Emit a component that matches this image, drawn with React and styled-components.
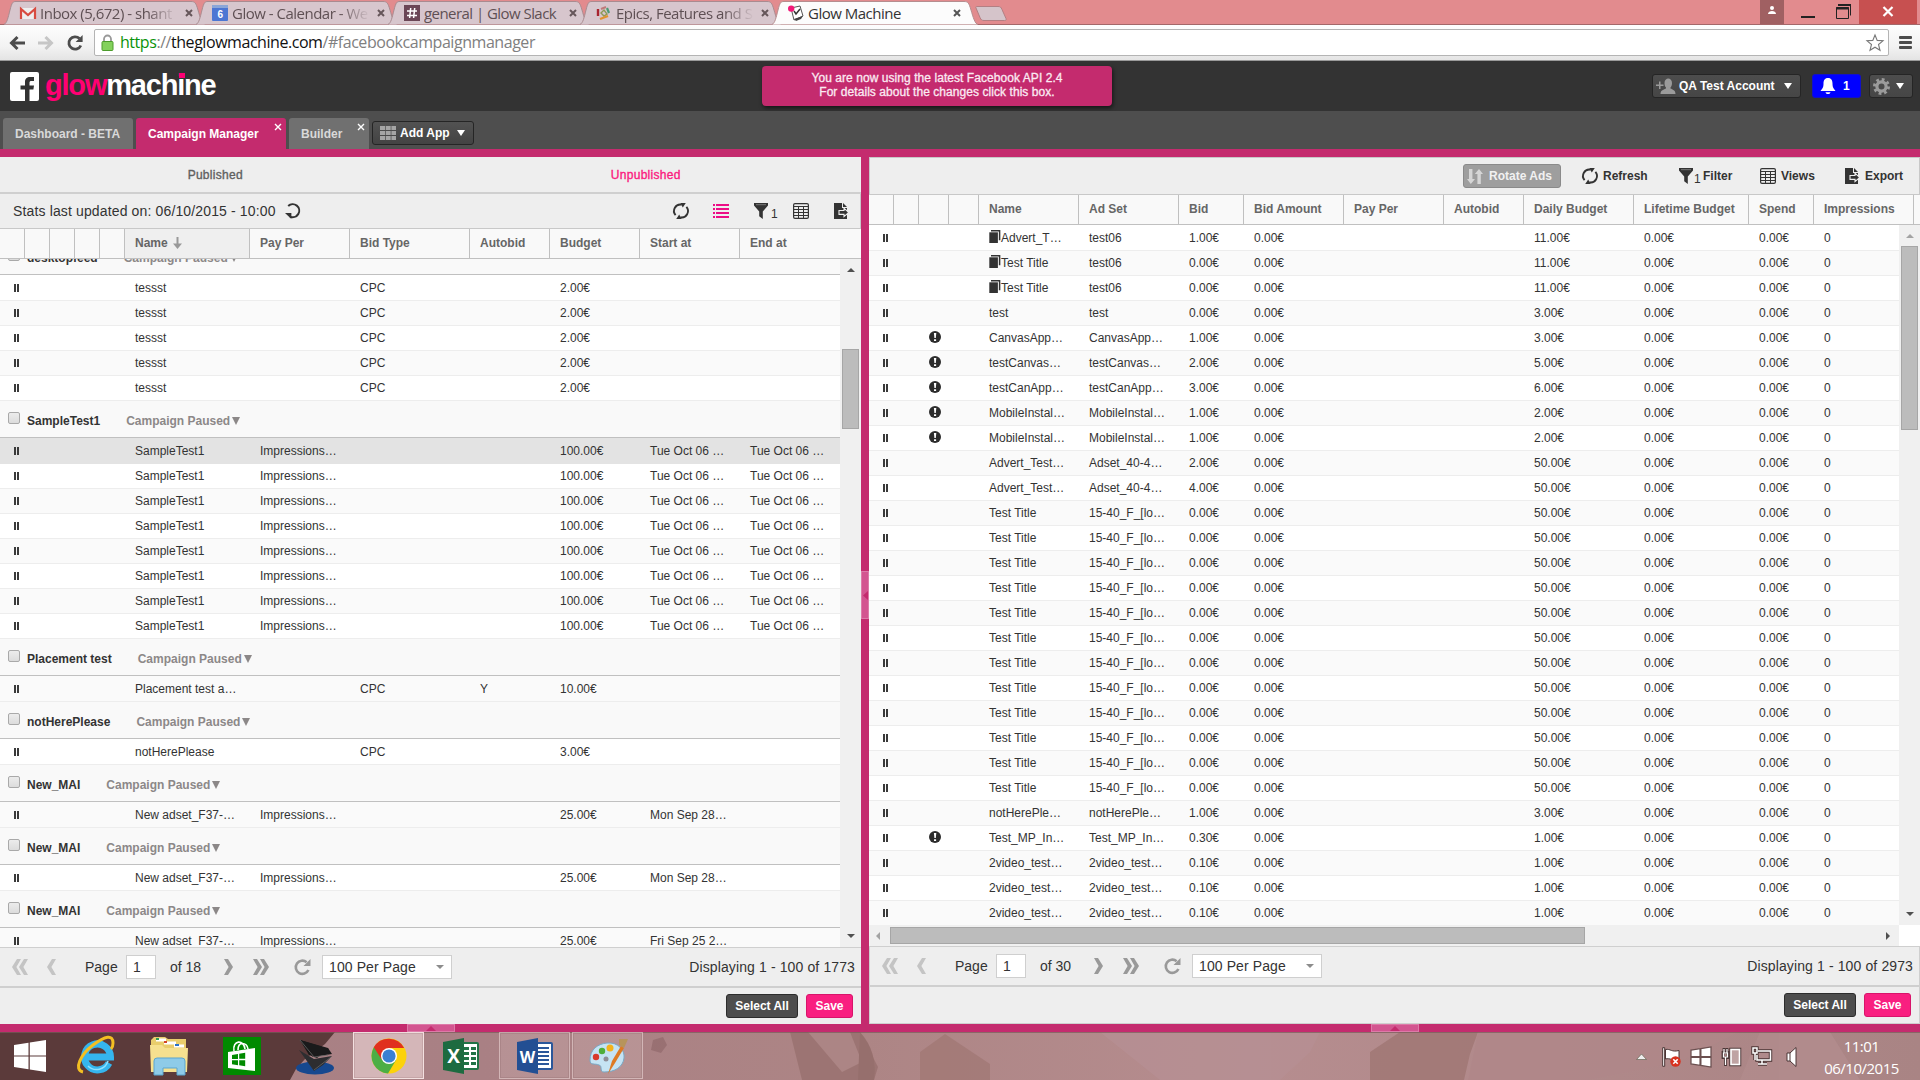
import React from "react";
import styled, { createGlobalStyle, css } from "styled-components";

const Global = createGlobalStyle`
  * { box-sizing: border-box; }
  body { margin: 0; background: #fff; overflow: hidden; }
`;

const ARIAL = '"Liberation Sans", Arial, sans-serif';
const SEGOE = '"Open Sans", "Noto Sans", sans-serif';
const PINK = "#c42b6e";
const LINE = "#cfcfcf";

const Screen = styled.div`
  width: 1920px;
  height: 1080px;
  display: flex;
  flex-direction: column;
  overflow: hidden;
  font: 12px/16px ${ARIAL};
  color: #333;
  background: #eee;
  white-space: nowrap;
`;
const Svg = styled.svg`
  display: block;
  flex: none;
  overflow: visible;
`;

/* ---------- browser chrome ---------- */
const TabStrip = styled.div`
  height: 25px;
  flex: none;
  display: flex;
  background: #e28b8e;
  border-bottom: 1px solid #a46769;
`;
const BrowserTabs = styled.div`
  display: flex;
  padding-left: 8px;
  flex: 1;
`;
const BrowserTabBox = styled.div`
  position: relative;
  z-index: ${(p) => (p.$active ? 2 : 0)};
  width: ${(p) => p.$w}px;
  height: 25px;
  display: flex;
  align-items: center;
  padding: 0 0 0 12px;
  font: 15px/22px ${SEGOE};
  letter-spacing: ${(p) => p.$ls}px;
  color: ${(p) => (p.$active ? "#333" : "#5f5054")};
`;
const TabShape = styled(Svg)`
  position: absolute;
  left: -4px;
  top: 0;
`;
const Fav = styled.div`
  position: relative;
  width: 16px;
  height: 16px;
  flex: none;
`;
const TabLabel = styled.span`
  position: relative;
  flex: none;
  width: ${(p) => p.$w}px;
  margin-left: 4px;
  overflow: hidden;
  ${(p) => p.$fade && css`mask-image: linear-gradient(90deg, #000 78%, transparent 100%);`}
`;
const TabClose = styled.div`
  position: relative;
  margin-left: auto;
  margin-right: ${(p) => p.$r}px;
`;
const WinControls = styled.div`
  display: flex;
  align-items: flex-start;
  height: 24px;
  padding-right: 3px;
`;
const WinButton = styled.div`
  width: ${(p) => p.$w}px;
  height: 24px;
  display: flex;
  justify-content: center;
  background: ${(p) => p.$bg || "transparent"};
`;
const AddressRow = styled.div`
  height: 36px;
  flex: none;
  display: flex;
  align-items: center;
  padding: 0 8px 0 9px;
  background: linear-gradient(#fdfdfd, #f3f3f3 60%, #e4e4e4);
  border-bottom: 1px solid #9a9a9a;
`;
const NavIcons = styled.div`
  display: flex;
  gap: 13px;
  width: 85px;
`;
const AddressBox = styled.div`
  flex: 1;
  height: 27px;
  display: flex;
  align-items: center;
  gap: 6px;
  padding: 0 4px 0 6px;
  background: #fff;
  border: 1px solid #b4b4b4;
  border-radius: 2px;
`;
const Url = styled.span`
  flex: 1;
  padding-bottom: 1px;
  font: 16px/22px ${SEGOE};
  letter-spacing: -0.45px;
  color: #808080;
  i { font-style: normal; color: #0a930a; }
  b { font-weight: normal; color: #111; }
`;
const MenuIcon = styled.div`
  display: grid;
  gap: 2px;
  width: 13px;
  margin-left: 10px;
  span { height: 3px; background: #4c4c4c; border-radius: 1px; }
`;

/* ---------- application header ---------- */
const Header = styled.div`
  height: 50px;
  flex: none;
  display: grid;
  grid-template-columns: 762px 350px 1fr;
  background: #333;
`;
const Brand = styled.div`
  display: flex;
  padding: 11px 0 0 10px;
`;
const BrandText = styled.div`
  position: relative;
  margin: -3px 0 0 6px;
  font: bold 29px/32px ${ARIAL};
  letter-spacing: -1.2px;
  color: #fff;
  em { font-style: normal; color: #ff0073; }
`;
const BrandDot = styled.span`
  position: absolute;
  left: 134px;
  top: 4px;
  width: 6px;
  height: 5px;
  background: #ff0073;
`;
const Notice = styled.div`
  height: 40px;
  margin-top: 5px;
  padding-top: 5px;
  text-align: center;
  font: 12px/14px ${ARIAL};
  letter-spacing: 0.06px;
  -webkit-text-stroke: 0.3px #fbeaf2;
  color: #fbeaf2;
  background: ${PINK};
  border-radius: 4px;
  box-shadow: 1px 2px 4px #0009;
`;
const HeaderTools = styled.div`
  display: flex;
  justify-content: flex-end;
  padding: 13px 7px 0 0;
`;
const DarkButton = styled.div`
  display: flex;
  align-items: center;
  width: ${(p) => p.$w}px;
  height: ${(p) => p.$h || 24}px;
  margin-left: ${(p) => p.$ml || 0}px;
  padding: 0 8px 0 ${(p) => p.$pl}px;
  font-weight: bold;
  color: #fff;
  background: ${(p) => p.$bg || "linear-gradient(#4d4d4d, #464646)"};
  border: 1px solid ${(p) => p.$line || "#252525"};
  border-radius: 3px;
`;
const Caret = styled.span`
  margin-left: auto;
  border: 4px solid transparent;
  border-top: 6px solid ${(p) => p.$c || "#fff"};
  border-bottom: 0;
`;
const ButtonText = styled.span`
  margin-left: ${(p) => p.$ml}px;
`;

const AppTabs = styled.div`
  height: 46px;
  flex: none;
  display: flex;
  align-items: flex-end;
  gap: 3px;
  padding-left: 3px;
  background: #4e4e4e;
  border-bottom: 8px solid ${PINK};
`;
const AppTab = styled.div`
  width: ${(p) => p.$w}px;
  height: 31px;
  display: flex;
  justify-content: space-between;
  padding: 8px 4px 0 12px;
  font-weight: bold;
  color: ${(p) => (p.$active ? "#fff" : "#d9d9d9")};
  background: ${(p) => (p.$active ? PINK : "#707070")};
  border-radius: 3px 3px 0 0;
`;
const AppTabClose = styled.div`
  margin-top: -3px;
`;
const AddAppWrap = styled.div`
  align-self: flex-start;
  padding-top: 10px;
`;

/* ---------- panels ---------- */
const Workspace = styled.div`
  height: 867px;
  flex: none;
  display: grid;
  grid-template-columns: 861px 8px 1051px;
`;
const Panel = styled.section`
  display: flex;
  flex-direction: column;
  min-width: 0;
  overflow: hidden;
  background: #eee;
`;
const Splitter = styled.div`
  display: flex;
  align-items: center;
  padding-top: 9px;
  height: 867px;
  background: ${PINK};
`;
const Grip = styled.div`
  display: flex;
  align-items: center;
  justify-content: center;
  width: ${(p) => p.$w}px;
  height: ${(p) => p.$h}px;
  background: #d35590;
  border: 1px solid #dd7aa8;
`;
const BottomBar = styled.div`
  height: 8px;
  flex: none;
  display: grid;
  grid-template-columns: 861px 1fr;
  justify-items: center;
  background: ${PINK};
`;
const GripSlot = styled.div`
  padding-left: ${(p) => p.$pl || 0}px;
`;
const StateTabs = styled.div`
  height: 37px;
  flex: none;
  display: grid;
  grid-template-columns: 1fr 1fr;
  border-bottom: 2px solid ${LINE};
`;
const StateTab = styled.div`
  text-align: center;
  padding-top: 10px;
  letter-spacing: 0.28px;
  -webkit-text-stroke: 0.35px currentColor;
  color: ${(p) => (p.$active ? "#fb1b80" : "#606060")};
`;
const StatsBar = styled.div`
  height: 35px;
  flex: none;
  display: flex;
  align-items: center;
  padding: 0 10px 0 13px;
  font-size: 14px;
  border-bottom: 1px solid #c8c8c8;
  border-right: 1px solid #c8c8c8;
`;
const StatsText = styled.span`
  letter-spacing: 0.14px;
  margin-right: 9px;
`;
const IconSlot = styled.div`
  display: flex;
  align-items: ${(p) => (p.$mt ? "flex-start" : "center")};
  margin-left: ${(p) => p.$ml || 0}px;
  margin-top: ${(p) => p.$mt || 0}px;
`;
const Push = styled.div`
  flex: 1;
`;
const Count = styled.span`
  width: ${(p) => p.$w || 8}px;
  padding: 5px 0 0 ${(p) => p.$pl ?? 1}px;
  font: 12px/12px ${ARIAL};
`;
const RightTools = styled.div`
  height: 38px;
  flex: none;
  display: flex;
  align-items: center;
  padding-right: 16px;
  font-weight: bold;
  border: 1px solid #c8c8c8;
`;
const RotateButton = styled.div`
  display: flex;
  align-items: center;
  gap: 6px;
  width: 98px;
  height: 24px;
  padding-left: 3px;
  color: #f1f1f1;
  background: #9e9e9e;
  border: 1px solid #8a8a8a;
  border-radius: 3px;
`;
const Tool = styled.div`
  display: flex;
  align-items: center;
  width: ${(p) => p.$w}px;
  margin-left: ${(p) => p.$ml}px;
`;
const ToolLabel = styled.span`
  margin-left: ${(p) => p.$ml ?? 5}px;
`;

/* ---------- grids ---------- */
const LEFT_COLS = "25px 25px 25px 25px 25px 125px 100px 120px 80px 90px 100px 1fr";
const RIGHT_COLS = "25px 25px 30px 30px 100px 100px 65px 100px 100px 80px 110px 115px 65px 100px 1fr";

const HeadRow = styled.div`
  height: 30px;
  flex: none;
  display: grid;
  grid-template-columns: ${(p) => p.$cols};
  background: #f9f9f9;
  border-bottom: 1px solid #c0c0c0;
  overflow: hidden;
`;
const HeadCell = styled.div`
  display: flex;
  padding: 6px 0 0 10px;
  font-weight: bold;
  color: #666;
  background: ${(p) => (p.$sorted ? "#efefef" : "transparent")};
  border-right: 1px solid #c0c0c0;
  &:last-child { border-right: 0; }
`;
const Body = styled.div`
  flex: 1;
  min-height: 0;
  display: grid;
  grid-template-columns: minmax(0, 1fr) 21px;
  grid-template-rows: minmax(0, 1fr) auto;
  background: #fff;
`;
const Rows = styled.div`
  overflow: hidden;
`;
const Scrolled = styled.div`
  margin-top: ${(p) => -p.$by}px;
`;
const Row = styled.div`
  display: grid;
  grid-template-columns: ${(p) => p.$cols};
  height: ${(p) => (p.$first ? 26 : 25)}px;
  padding-top: ${(p) => (p.$first ? 5 : 4)}px;
  background: ${(p) => (p.$selected ? "#e3e3e3" : p.$alt ? "#fafafa" : "#fff")};
  border-bottom: 1px solid ${(p) => (p.$selected ? "#e3e3e3" : "#ededed")};
`;
const Cell = styled.div`
  display: flex;
  padding-left: 10px;
`;
const PauseMark = styled.span`
  width: 5px;
  height: 8px;
  margin: 4px 0 0 4px;
  border: solid #3a3a3a;
  border-width: 0 2px;
`;
const GroupRow = styled.div`
  height: 37px;
  display: flex;
  padding-left: 8px;
  background: #f9f9f9;
  border-bottom: 1px solid #c0c0c0;
  font-weight: bold;
`;
const Check = styled.span`
  width: 12px;
  height: 12px;
  margin-top: 11px;
  border: 1px solid #a9a9a9;
  border-radius: 2px;
  background: linear-gradient(#ececec, #dcdcdc);
`;
const GroupName = styled.span`
  margin: 12px 26px 0 7px;
`;
const GroupStatus = styled.span`
  display: flex;
  gap: 2px;
  margin-top: 12px;
  color: #8c8888;
`;

const VScroll = styled.div`
  display: flex;
  flex-direction: column;
  align-items: center;
  background: #f0f0f0;
`;
const VArrow = styled.span`
  height: 4px;
  margin: ${(p) => p.$m};
  border: 4px solid transparent;
  ${(p) => (p.$up ? "border-bottom" : "border-top")}-color: ${(p) => p.$c};
  ${(p) => (p.$up ? "border-top: 0" : "border-bottom: 0")};
`;
const VThumb = styled.div`
  width: 17px;
  height: ${(p) => p.$h}px;
  background: #bcbcbc;
  border: 1px solid #a6a6a6;
`;
const HScroll = styled.div`
  height: 21px;
  display: flex;
  align-items: center;
  background: #f0f0f0;
`;
const HArrow = styled.span`
  margin: ${(p) => p.$m};
  border: 4px solid transparent;
  ${(p) => (p.$left ? "border-right-color: #a3a3a3; border-left: 0" : "border-left-color: #505050; border-right: 0")};
`;
const HThumb = styled.div`
  width: 695px;
  height: 17px;
  background: #bcbcbc;
  border: 1px solid #a6a6a6;
`;

/* ---------- pager and footer ---------- */
const PagerBar = styled.div`
  height: 41px;
  flex: none;
  display: flex;
  align-items: center;
  padding: 0 6px 0 12px;
  font-size: 14px;
  border: solid ${LINE};
  border-width: 1px ${(p) => (p.$framed ? 1 : 0)}px 2px ${(p) => (p.$framed ? 1 : 0)}px;
`;
const PagerSlot = styled.div`
  width: ${(p) => p.$w}px;
  flex: none;
`;
const PageInput = styled.div`
  width: 30px;
  height: 24px;
  margin-right: 14px;
  padding: 3px 0 0 6px;
  background: #fff;
  border: 1px solid ${LINE};
`;
const PageSize = styled.div`
  width: 130px;
  height: 24px;
  display: flex;
  align-items: center;
  padding: 0 7px 0 6px;
  background: #fff;
  border: 1px solid ${LINE};
  letter-spacing: 0.1px;
`;
const SmallCaret = styled.span`
  margin-left: auto;
  border: 4px solid transparent;
  border-top-color: #8c8c8c;
  border-bottom: 0;
`;
const Totals = styled.span`
  margin-left: auto;
  letter-spacing: 0.12px;
`;
const FooterBar = styled.div`
  height: ${(p) => (p.$framed ? 37 : 36)}px;
  flex: none;
  display: flex;
  justify-content: flex-end;
  gap: 8px;
  padding: 6px 8px 0 0;
  border: solid ${LINE};
  border-width: 0 ${(p) => (p.$framed ? 1 : 0)}px ${(p) => (p.$framed ? 1 : 0)}px;
`;
const FooterButton = styled.div`
  width: ${(p) => (p.$primary ? 47 : 72)}px;
  height: 24px;
  padding-top: 3px;
  text-align: center;
  font-weight: bold;
  color: #fff;
  background: ${(p) => (p.$primary ? "#f91f80" : "#4d4d4d")};
  border: 1px solid ${(p) => (p.$primary ? "#d8146a" : "#2c2c2c")};
  border-radius: 3px;
`;

/* ---------- taskbar ---------- */
const Taskbar = styled.div`
  position: relative;
  height: 48px;
  flex: none;
  display: flex;
  background: #a98583;
`;
const Wallpaper = styled(Svg)`
  position: absolute;
  left: 0;
  top: 0;
`;
const TaskIcons = styled.div`
  position: relative;
  display: flex;
  flex: 1;
`;
const Task = styled.div`
  width: ${(p) => p.$w}px;
  height: 47px;
  margin-right: ${(p) => p.$mr || 0}px;
  display: flex;
  align-items: center;
  justify-content: center;
  ${(p) => p.$open && css`
    background: rgba(255, 235, 235, ${p.$open});
    border: 1px solid rgba(255, 240, 240, ${p.$open + 0.22});
    box-shadow: inset 0 0 0 1px rgba(90, 50, 50, 0.12);
  `}
`;
const Tray = styled.div`
  position: relative;
  display: flex;
  align-items: center;
  padding-top: 1px;
`;
const TrayIcon = styled.div`
  margin-right: ${(p) => p.$mr}px;
`;
const Clock = styled.div`
  width: 110px;
  padding-right: 7px;
  text-align: center;
  font: 15px/22px ${SEGOE};
  letter-spacing: -0.5px;
  color: #fff;
`;

/* ---------- icons ---------- */
const Cross = ({ c, s = 8, w = 2 }) => (
  <Svg width={s} height={s} viewBox="0 0 8 8" stroke={c} strokeWidth={w}>
    <path d="M1 1l6 6M7 1l-6 6" />
  </Svg>
);
const RefreshIcon = () => (
  <Svg width="16" height="16" viewBox="0 0 16 16" fill="none" stroke="#333" strokeWidth="1.9">
    <path d="M2.6 12.2A6.4 6.4 0 0 1 8.6 1.7M13.4 3.8A6.4 6.4 0 0 1 7.4 14.3" />
    <path d="M7.4 0h5.4l-3 4.6zM8.6 16H3.2l3-4.6z" fill="#333" stroke="none" />
  </Svg>
);
const ReloadStats = () => (
  <Svg width="16" height="16" viewBox="0 0 16 16" fill="none" stroke="#333" strokeWidth="2">
    <path d="M3.2 3A6.5 6.5 0 1 1 5 13.6" />
    <path d="M0 10h6.4v6z" fill="#333" stroke="none" />
  </Svg>
);
const ListIcon = () => (
  <Svg width="16" height="16" viewBox="0 0 16 16" fill="#ec0d86">
    {[1, 5, 9, 13].map((y) => (
      <path key={y} d={`M0 ${y}h2v2h-2zM3 ${y}h13v2H3z`} />
    ))}
  </Svg>
);
const FunnelIcon = () => (
  <Svg width="15" height="16" viewBox="0 0 15 16" fill="#333">
    <path d="M0 0h14v2.4L8.8 8.4V16L5.2 13.3V8.4L0 2.4z" />
    <path d="M2 1.7h10" stroke="#888" strokeWidth=".8" />
  </Svg>
);
const TableIcon = () => (
  <Svg width="16" height="16" viewBox="0 0 16 16" fill="none" stroke="#333">
    <rect x=".6" y=".6" width="14.8" height="14.8" rx="1.4" strokeWidth="1.2" />
    <path d="M1 3.5h14M1 6.5h14M1 9.5h14M1 12.5h14M5.5 3.5V15M10.5 3.5V15" />
  </Svg>
);
const ExportIcon = () => (
  <Svg width="16" height="16" viewBox="0 0 16 16" fill="#333">
    <path d="M0 0h8v5h5v11H0z" />
    <path d="M9 0l4 4H9z" />
    <path d="M5 7.5h5V5.2l4.8 4.3L10 13.6v-2.2H5z" fill="#333" stroke="#eee" strokeWidth="1.1" />
    <path d="M13.5 4v3M13.5 13v3" stroke="#eee" />
  </Svg>
);
const RotateIcon = () => (
  <Svg width="16" height="17" viewBox="0 0 16 17" fill="#d6d6d6">
    <path d="M2 1h3.4v10H8l-4.2 5L0 11h2zM10.4 16h3.4V6H16l-4-5-4.2 5h2.6z" />
  </Svg>
);
const Chevrons = ({ n, right, c }) => (
  <Svg width={n === 2 ? 16 : 9} height="16" viewBox={`0 0 ${n === 2 ? 16 : 9} 16`} fill={c}>
    <g transform={right ? "" : `translate(${n === 2 ? 16 : 9} 0) scale(-1 1)`}>
      <path d="M0 0h4l5 8-5 8H0l4.6-8z" />
      {n === 2 && <path d="M7 0h4l5 8-5 8H7l4.6-8z" />}
    </g>
  </Svg>
);
const PagerReload = () => (
  <Svg width="17" height="16" viewBox="0 0 17 16" fill="none" stroke="#999" strokeWidth="2.6">
    <path d="M14.4 11A6.6 6.6 0 1 1 12.6 3.2" />
    <path d="M16.5 0v7H9.5z" fill="#999" stroke="none" />
  </Svg>
);
const WarnIcon = () => (
  <Svg width="12" height="12" viewBox="0 0 12 12">
    <circle cx="6" cy="6" r="6" fill="#2d2d2d" />
    <path d="M4.9 2h2.4L6.8 7H5.4zM5 8.2h2.1V10H5z" fill="#fff" />
  </Svg>
);
const CopyIcon = () => (
  <Svg width="12" height="13" viewBox="0 0 12 13">
    <path d="M2 .8h8.600v9.400" fill="none" stroke="#333" strokeWidth="1.5" />
    <path d="M.3 2.300h8.600V13H.3z" fill="#333" />
  </Svg>
);
const SortIcon = () => (
  <Svg width="9" height="12" viewBox="0 0 9 12" fill="none" stroke="#999" strokeWidth="2">
    <path d="M4.5 0v10" />
    <path d="M0 6.500h9L4.500 12z" fill="#999" stroke="none" />
  </Svg>
);
const WinLogo = ({ s, c = "#fff", o }) => (
  <Svg width={s} height={s} viewBox="0 0 32 32" fill={c} stroke={o} strokeWidth={o ? 2 : 0}>
    <path d="M0 5l14.5-2.2v12.6H0zM15.8 2.6L32 0v15.4H15.8zM0 16.6h14.5v12.6L0 27zM15.8 16.6H32V32l-16.2-2.5z" />
  </Svg>
);

/* ---------- data ---------- */
const rep = (n, v) => Array.from({ length: n }, () => v);
const paused = ["SampleTest1", "Impressions…", "", "", "100.00€", "Tue Oct 06 …", "Tue Oct 06 …"];
const groups = [
  { name: "desktopfeed", rows: rep(5, ["tessst", "", "CPC", "", "2.00€", "", ""]) },
  { name: "SampleTest1", rows: rep(8, paused), selected: 0, parity: 1 },
  { name: "Placement test", rows: [["Placement test a…", "", "CPC", "Y", "10.00€", "", ""]], parity: 1 },
  { name: "notHerePlease", rows: [["notHerePlease", "", "CPC", "", "3.00€", "", ""]] },
  { name: "New_MAI", rows: [["New adset_F37-…", "Impressions…", "", "", "25.00€", "Mon Sep 28…", ""]], parity: 1 },
  { name: "New_MAI", rows: [["New adset_F37-…", "Impressions…", "", "", "25.00€", "Mon Sep 28…", ""]] },
  { name: "New_MAI", rows: [["New adset_F37-…", "Impressions…", "", "", "25.00€", "Fri Sep 25 2…", ""]], parity: 1 },
];
const ads = [
  ["Advert_T…", "test06", "1.00€", "11.00€", "copy"],
  ["Test Title", "test06", "0.00€", "11.00€", "copy"],
  ["Test Title", "test06", "0.00€", "11.00€", "copy"],
  ["test", "test", "0.00€", "3.00€"],
  ["CanvasApp…", "CanvasApp…", "1.00€", "3.00€", "warn"],
  ["testCanvas…", "testCanvas…", "2.00€", "5.00€", "warn"],
  ["testCanApp…", "testCanApp…", "3.00€", "6.00€", "warn"],
  ["MobileInstal…", "MobileInstal…", "1.00€", "2.00€", "warn"],
  ["MobileInstal…", "MobileInstal…", "1.00€", "2.00€", "warn"],
  ["Advert_Test…", "Adset_40-4…", "2.00€", "50.00€"],
  ["Advert_Test…", "Adset_40-4…", "4.00€", "50.00€"],
  ...rep(12, ["Test Title", "15-40_F_[lo…", "0.00€", "50.00€"]),
  ["notHerePle…", "notHerePle…", "1.00€", "3.00€"],
  ["Test_MP_In…", "Test_MP_In…", "0.30€", "1.00€", "warn"],
  ...rep(3, ["2video_test…", "2video_test…", "0.10€", "1.00€"]),
];
const leftHeads = ["", "", "", "", "", "Name", "Pay Per", "Bid Type", "Autobid", "Budget", "Start at", "End at"];
const rightHeads = ["", "", "", "", "Name", "Ad Set", "Bid", "Bid Amount", "Pay Per", "Autobid", "Daily Budget", "Lifetime Budget", "Spend", "Impressions", ""];

/* ---------- composed parts ---------- */
function BrowserTab({ label, active, w, labelW, fade, closeR, ls = -0.5, children }) {
  const end = active ? 206 : w + 9;
  return (
    <BrowserTabBox $active={active} $w={w} $ls={ls}>
      <TabShape width={end} height="25" viewBox={`0 0 ${end} 25`}>
        <path
          d={`M0 24.5C3 23 4 18 6 10S9 1.5 12 1.5H${end - 14}C${end - 10} 1.5 ${end - 9} 3 ${end - 7} 10S${end - 3} 24 ${end} 24.5`}
          fill={active ? "#fcfcfc" : "#d7c6cd"}
          stroke={active ? "#b58d8f" : "#a98b90"}
        />
      </TabShape>
      <Fav>{children}</Fav>
      <TabLabel $w={labelW} $fade={fade}>{label}</TabLabel>
      <TabClose $r={closeR}><Cross c={active ? "#555" : "#66565a"} /></TabClose>
    </BrowserTabBox>
  );
}

function Browser() {
  return (
    <>
      <TabStrip>
        <BrowserTabs>
          <BrowserTab label="Inbox (5,672) - shant" w={192} labelW={137} fade closeR={7}>
            <Svg width="16" height="16" viewBox="0 0 16 16">
              <path d="M0 3h16v11H0z" fill="#eee" />
              <path d="M1 14V4l7 6 7-6v10" fill="none" stroke="#d84b40" strokeWidth="2.2" />
            </Svg>
          </BrowserTab>
          <BrowserTab label="Glow - Calendar - We" w={192} labelW={138} fade closeR={7}>
            <Svg width="16" height="16" viewBox="0 0 16 16">
              <rect width="16" height="16" rx="1" fill="#4d76d3" />
              <path d="M0 0h16v3H0z" fill="#8ba6d8" />
              <text x="8" y="13" fontSize="10" fontWeight="bold" textAnchor="middle" fill="#fff" fontFamily="Liberation Sans">6</text>
            </Svg>
          </BrowserTab>
          <BrowserTab label="general | Glow Slack" w={192} labelW={140} closeR={7} ls={-0.55}>
            <Svg width="16" height="16" viewBox="0 0 16 16">
              <rect width="16" height="16" fill="#6b4656" />
              <path d="M3 6h10M3 10.4h10M6.7 3L5.6 13M10.7 3L9.6 13" stroke="#fff" strokeWidth="1.5" />
            </Svg>
          </BrowserTab>
          <BrowserTab label="Epics, Features and S" w={192} labelW={138} fade closeR={7}>
            <Svg width="16" height="16" viewBox="0 0 16 16" fill="none">
              <path d="M2 4v7" stroke="#a8242f" strokeWidth="2.4" />
              <path d="M5 4l5-2" stroke="#c07a7a" strokeWidth="2" />
              <path d="M11 3l2 5" stroke="#4d9a74" strokeWidth="2.2" />
              <path d="M5 8l3-3 3 4-3 2z" stroke="#8d9a55" strokeWidth="1.4" />
              <path d="M4 14l8-3" stroke="#e0912e" strokeWidth="2.4" />
            </Svg>
          </BrowserTab>
          <BrowserTab label="Glow Machine" active w={199} labelW={130} closeR={14}>
            <Svg width="16" height="16" viewBox="0 0 16 16">
              <path d="M3 3l9-2 3 10-9 4z" fill="#fff" stroke="#555" />
              <path d="M6 14l9-3-2 3-5 2z" fill="#444" />
              <path d="M6 6l2 3 4-5" fill="none" stroke="#333" strokeWidth="1.5" />
              <circle cx="3.2" cy="3.6" r="3.2" fill="#f21878" />
            </Svg>
          </BrowserTab>
          <Svg width="32" height="25" viewBox="0 0 32 25">
            <path d="M2 6.5h21c2 0 3 .5 4 3l4 9c.5 1.500 0 2-1.500 2H9c-2 0-3-.5-4-3L1 8c-.4-1 0-1.500 1-1.500z" fill="#d5c4ca" stroke="#b37f83" />
          </Svg>
        </BrowserTabs>
        <WinControls>
          <WinButton $w={24} $bg="#a06062">
            <Svg width="8" height="24" viewBox="0 0 8 24" fill="#fff">
              <circle cx="4" cy="8" r="2" />
              <path d="M0 14c0-4 8-4 8 0z" />
            </Svg>
          </WinButton>
          <WinButton $w={48}>
            <Svg width="14" height="24" viewBox="0 0 14 24"><path d="M0 16h14v2H0z" fill="#222" /></Svg>
          </WinButton>
          <WinButton $w={27}>
            <Svg width="24" height="24" viewBox="0 0 24 24" fill="none" stroke="#222">
              <path d="M2.500 7.500h12v11h-12zM4.500 4.500h12v11" />
              <path d="M2 8.500h13M4 5h13" strokeWidth="2" />
            </Svg>
          </WinButton>
          <WinButton $w={58} $bg="#c75050">
            <Svg width="10" height="24" viewBox="0 0 10 24" stroke="#fff" strokeWidth="2.200">
              <path d="M.5 7l9 9M9.500 7l-9 9" />
            </Svg>
          </WinButton>
        </WinControls>
      </TabStrip>
      <AddressRow>
        <NavIcons>
          <Svg width="16" height="16" viewBox="0 0 16 16" fill="none" stroke="#4c4c4c" strokeWidth="3"><path d="M16 8H3M8.500 2L2.500 8l6 6" /></Svg>
          <Svg width="16" height="16" viewBox="0 0 16 16" fill="none" stroke="#c6c6c6" strokeWidth="3"><path d="M0 8h13M7.500 2l6 6-6 6" /></Svg>
          <Svg width="16" height="16" viewBox="0 0 16 16" fill="none" stroke="#4c4c4c" strokeWidth="2.800"><path d="M13.800 10.500A6.200 6.200 0 1 1 12.500 3.600" /><path d="M15.600 0v7H8.600z" fill="#4c4c4c" stroke="none" /></Svg>
        </NavIcons>
        <AddressBox>
          <Svg width="13" height="17" viewBox="0 0 13 17">
            <path d="M3 8V5a3.500 3.500 0 0 1 7 0v3" fill="none" stroke="#999" strokeWidth="1.800" />
            <rect x="1" y="7.500" width="11" height="9" rx="1" fill="#83d15c" stroke="#4c9c2c" />
          </Svg>
          <Url><i>https</i>://<b>theglowmachine.com</b>/#facebookcampaignmanager</Url>
          <Svg width="18" height="18" viewBox="0 0 18 18">
            <path d="M9 1l2.200 5.400 5.800.4-4.500 3.700 1.500 5.800L9 13.200 4 16.300l1.500-5.800L1 6.800l5.800-.4z" fill="#fff" stroke="#777" strokeWidth="1.100" />
          </Svg>
        </AddressBox>
        <MenuIcon><span /><span /><span /></MenuIcon>
      </AddressRow>
    </>
  );
}

function AppHeader() {
  return (
    <>
      <Header>
        <Brand>
          <Svg width="29" height="29" viewBox="0 0 29 29">
            <rect width="29" height="29" rx="2" fill="#fff" />
            <path d="M15 29V17.500h-4.500v-4H15V10c0-3.500 2-5 5-5h4v4h-2.500c-1.500 0-2 .6-2 2v2.500H24l-.6 4h-3.900V29z" fill="#333" />
          </Svg>
          <BrandText><em>glow</em>machine<BrandDot /></BrandText>
        </Brand>
        <Notice>
          You are now using the latest Facebook API 2.4<br />
          For details about the changes click this box.
        </Notice>
        <HeaderTools>
          <DarkButton $w={149} $pl={3}>
            <Svg width="20" height="17" viewBox="0 0 20 17" fill="#9b9b9b">
              <path d="M0 6.500h3v-3h1.500v3h3V8h-3v3H3V8H0z" />
              <path d="M8.500 5c0-6 7.500-6 7.500 0 0 2-.7 3.500-1.500 4.500v1c2 1 5 1.500 5 5.500H4.500c0-4 3.500-4.500 5.500-5.500v-1C9 8.500 8.500 7 8.500 5z" />
            </Svg>
            <ButtonText $ml={3}>QA Test Account</ButtonText>
            <Caret />
          </DarkButton>
          <DarkButton $w={49} $ml={11} $pl={7} $bg="#0000ff" $line="#1010c8">
            <Svg width="16" height="17" viewBox="0 0 16 17" fill="#fff">
              <path d="M8 0c3.500 0 4.500 2.500 4.500 5.500 0 4 1 5 3 7.500H.5c2-2.500 3-3.500 3-7.500C3.500 2.500 4.500 0 8 0zM5.500 14.200h5c-.5 2.500-4.500 2.500-5 0z" />
            </Svg>
            <ButtonText $ml={7}>1</ButtonText>
          </DarkButton>
          <DarkButton $w={44} $ml={8} $pl={3}>
            <Svg width="17" height="17" viewBox="0 0 17 17" fill="none" stroke="#9b9b9b">
              <circle cx="8.500" cy="8.500" r="4.600" strokeWidth="3.200" />
              <circle cx="8.500" cy="8.500" r="7" strokeWidth="3" strokeDasharray="2.750 2.750" />
            </Svg>
            <Caret />
          </DarkButton>
        </HeaderTools>
      </Header>
      <AppTabs>
        <AppTab $w={130}>Dashboard - BETA</AppTab>
        <AppTab $w={150} $active>Campaign Manager<AppTabClose><Cross c="#fff" s={8} w={1.4} /></AppTabClose></AppTab>
        <AppTab $w={80}>Builder<AppTabClose><Cross c="#fff" s={8} w={1.4} /></AppTabClose></AppTab>
        <AddAppWrap>
          <DarkButton $w={102} $h={24} $pl={7} $bg="linear-gradient(#525252, #434343)">
            <Svg width="16" height="14" viewBox="0 0 16 14" fill="#a5a5a5">
              {[0, 5, 10].map((y) => <path key={y} d={`M0 ${y}h5v4H0zM5.700 ${y}h5v4h-5zM11.400 ${y}h4.600v4h-4.600z`} />)}
            </Svg>
            <ButtonText $ml={4}>Add App</ButtonText>
            <Caret />
          </DarkButton>
        </AddAppWrap>
      </AppTabs>
    </>
  );
}

function Pager({ pages, total, framed }) {
  return (
    <PagerBar $framed={framed}>
      <PagerSlot $w={35}><Chevrons n={2} c="#c4c4c4" /></PagerSlot>
      <PagerSlot $w={22}><Chevrons n={1} c="#c4c4c4" /></PagerSlot>
      <PagerSlot $w={57}><ButtonText $ml={16}>Page</ButtonText></PagerSlot>
      <PageInput>1</PageInput>
      <PagerSlot $w={54}>of {pages}</PagerSlot>
      <PagerSlot $w={29}><Chevrons n={1} right c="#999" /></PagerSlot>
      <PagerSlot $w={41}><Chevrons n={2} right c="#999" /></PagerSlot>
      <PagerSlot $w={28}><PagerReload /></PagerSlot>
      <PageSize>100 Per Page<SmallCaret /></PageSize>
      <Totals>Displaying 1 - 100 of {total}</Totals>
    </PagerBar>
  );
}

function Footer({ framed }) {
  return (
    <FooterBar $framed={framed}>
      <FooterButton>Select All</FooterButton>
      <FooterButton $primary>Save</FooterButton>
    </FooterBar>
  );
}

function CampaignPanel() {
  return (
    <Panel>
      <StateTabs>
        <StateTab>Published</StateTab>
        <StateTab $active>Unpublished</StateTab>
      </StateTabs>
      <StatsBar>
        <StatsText>Stats last updated on: 06/10/2015 - 10:00</StatsText>
        <ReloadStats />
        <Push />
        <IconSlot><RefreshIcon /></IconSlot>
        <IconSlot $ml={24}><ListIcon /></IconSlot>
        <IconSlot $ml={25}><FunnelIcon /><Count $w={9} $pl={2}>1</Count></IconSlot>
        <IconSlot $ml={15}><TableIcon /></IconSlot>
        <IconSlot $ml={25}><ExportIcon /></IconSlot>
      </StatsBar>
      <HeadRow $cols={LEFT_COLS}>
        {leftHeads.map((h, i) => (
          <HeadCell key={i} $sorted={h === "Name"}>
            {h}
            {h === "Name" && <IconSlot $ml={5} $mt={2}><SortIcon /></IconSlot>}
          </HeadCell>
        ))}
      </HeadRow>
      <Body>
        <Rows>
          <Scrolled $by={21}>
            {groups.map((g, gi) => (
              <React.Fragment key={gi}>
                <GroupRow>
                  <Check />
                  <GroupName>{g.name}</GroupName>
                  <GroupStatus>
                    Campaign Paused
                    <Svg width="8" height="16" viewBox="0 0 8 16"><path d="M0 4h8L4 12z" fill="#8c8888" /></Svg>
                  </GroupStatus>
                </GroupRow>
                {g.rows.map((r, i) => (
                  <Row key={i} $cols={LEFT_COLS} $first={i === 0} $selected={g.selected === i} $alt={(i + (g.parity || 0)) % 2 === 1}>
                    <Cell><PauseMark /></Cell>
                    <Cell /><Cell /><Cell /><Cell />
                    {r.map((c, k) => <Cell key={k}>{c}</Cell>)}
                  </Row>
                ))}
              </React.Fragment>
            ))}
          </Scrolled>
        </Rows>
        <VScroll>
          <VArrow $up $c="#505050" $m="9px 0 77px" />
          <VThumb $h={80} />
          <VArrow $c="#505050" $m="auto 0 9px" />
        </VScroll>
      </Body>
      <Pager pages={18} total={1773} />
      <Footer />
    </Panel>
  );
}

function AdsPanel() {
  return (
    <Panel>
      <RightTools>
        <Push />
        <RotateButton><RotateIcon />Rotate Ads</RotateButton>
        <Tool $w={76} $ml={21}><RefreshIcon /><ToolLabel>Refresh</ToolLabel></Tool>
        <Tool $w={61} $ml={21}><FunnelIcon /><Count $w={8} $pl={0}>1</Count><ToolLabel $ml={1}>Filter</ToolLabel></Tool>
        <Tool $w={64} $ml={20}><TableIcon /><ToolLabel>Views</ToolLabel></Tool>
        <Tool $w={58} $ml={21}><ExportIcon /><ToolLabel $ml={4}>Export</ToolLabel></Tool>
      </RightTools>
      <HeadRow $cols={RIGHT_COLS}>
        {rightHeads.map((h, i) => <HeadCell key={i}>{h}</HeadCell>)}
      </HeadRow>
      <Body>
        <Rows>
          {ads.map(([name, set, bid, daily, mark], i) => (
            <Row key={i} $cols={RIGHT_COLS} $first={i === 0} $alt={i % 2 === 1}>
              <Cell><PauseMark /></Cell>
              <Cell />
              <Cell>{mark === "warn" && <IconSlot $mt={1}><WarnIcon /></IconSlot>}</Cell>
              <Cell />
              <Cell>{mark === "copy" && <CopyIcon />}{name}</Cell>
              <Cell>{set}</Cell>
              <Cell>{bid}</Cell>
              <Cell>0.00€</Cell>
              <Cell /><Cell />
              <Cell>{daily}</Cell>
              <Cell>0.00€</Cell>
              <Cell>0.00€</Cell>
              <Cell>0</Cell>
            </Row>
          ))}
        </Rows>
        <VScroll>
          <VArrow $up $c="#a3a3a3" $m="9px 0 8px" />
          <VThumb $h={184} />
          <VArrow $c="#505050" $m="auto 0 9px" />
        </VScroll>
        <HScroll>
          <HArrow $left $m="0 10px 0 7px" />
          <HThumb />
          <HArrow $m="0 9px 0 auto" />
        </HScroll>
      </Body>
      <Pager pages={30} total={2973} framed />
      <Footer framed />
    </Panel>
  );
}

function OfficeIcon({ c, dark, letter, sheet }) {
  return (
    <Svg width="36" height="36" viewBox="0 0 36 36">
      <rect x="19" y="5" width="16" height="26" rx="1" fill="#fff" stroke={c} strokeWidth="2" />
      {sheet
        ? <path d="M21 9h5v3h-5zM28 9h5v3h-5zM21 14h5v3h-5zM28 14h5v3h-5zM21 19h5v3h-5zM28 19h5v3h-5zM21 24h5v3h-5zM28 24h5v3h-5z" fill={c} />
        : <path d="M21 9h11v2H21zM21 13h11v2H21zM21 17h11v2H21zM21 21h11v2H21zM21 25h11v2H21z" fill={c} />}
      <path d="M0 4l21-4v36L0 32z" fill={dark} />
      <text x="10.500" y="24.500" fontSize={sheet ? 19 : 16} fontWeight="bold" textAnchor="middle" fill="#fff" fontFamily="Open Sans">{letter}</text>
    </Svg>
  );
}

function TaskBar() {
  return (
    <Taskbar>
      <Wallpaper width="1920" height="48" viewBox="0 0 1920 48">
        <defs>
          <linearGradient id="stone" x1="0" x2="1">
            <stop offset="0" stopColor="#a98285" />
            <stop offset=".25" stopColor="#a98084" />
            <stop offset=".45" stopColor="#ad8585" />
            <stop offset=".65" stopColor="#b68d8f" />
            <stop offset="1" stopColor="#a98484" />
          </linearGradient>
        </defs>
        <path d="M0 0h1920v48H0z" fill="url(#stone)" />
        <path d="M0 0h335l-10 12-20 15-9 10-6 11H0z" fill="#5b3a3a" />
        <g opacity=".7">
          <path d="M790 0h70l18 35-4 13h-72z" fill="#966e6c" />
          <path d="M808 0h42l12 30-20 10z" fill="#ac8685" />
          <path d="M920 20l25-18 45 30v16h-70z" fill="#a07773" />
          <path d="M1100 0h220l-10 20-30 28h-120z" fill="#b79094" />
          <path d="M860 0q18 20 14 48h-16z" fill="#8d6763" />
          <path d="M1370 20l30-20h78l-8 22-6 26h-94z" fill="#9d7470" />
          <path d="M1478 0h260l-60 30-90 18h-120z" fill="#b08789" />
          <path d="M1760 0h70l30 48h-120z" fill="#b38d8e" />
          <path d="M653 8l10-3 4 8-6 8-10-3z" fill="#80595b" opacity=".6" />
        </g>
        <path d="M0 .5h1920" stroke="#7b5a59" opacity=".7" />
      </Wallpaper>
      <TaskIcons>
        <Task $w={60}><WinLogo s={32} /></Task>
        <Task $w={71}>
          <Svg width="40" height="40" viewBox="0 0 40 40" fill="none">
            <path d="M33 27A13 13 0 1 1 34.500 21H10" stroke="#35b5ee" strokeWidth="7" />
            <path d="M32 25A12 12 0 0 1 12 30" stroke="#8fe0ff" strokeWidth="1.500" />
            <path d="M7 36C-3 34 5 18 17 9S37-2 37 7c0 3-1 5-2 6" stroke="#f3bf22" strokeWidth="3" />
          </Svg>
        </Task>
        <Task $w={76}>
          <Svg width="40" height="40" viewBox="0 0 40 40">
            <path d="M2 4l3-3h11l3 2h18v32H2z" fill="#e9cd6c" />
            <path d="M7 4h10M15 7h12M25 10h10" stroke="#fff" strokeWidth="3" />
            <path d="M7 3h3" stroke="#2d9d57" strokeWidth="2" />
            <path d="M15 6h3" stroke="#d3452b" strokeWidth="2" />
            <path d="M26 9h4" stroke="#2a72c8" strokeWidth="2" />
            <path d="M1 9h12l3 3h23l-1 24H2z" fill="#f6e08f" />
            <path d="M5 39V25q0-3 3-3h25q3 0 3 3v14h-8v-7H14v7z" fill="#8ecbe8" stroke="#5aa5cf" />
          </Svg>
        </Task>
        <Task $w={70}>
          <Svg width="38" height="38" viewBox="0 0 38 38">
            <path d="M0 0h38v38H0z" fill="#008a00" />
            <path d="M5 15l27-4v23L5 31z" fill="#fff" />
            <path d="M11 14c-2-11 10-12 11-2M15 13c0-9 9-8 10-1" fill="none" stroke="#fff" strokeWidth="1.600" />
            <path d="M9 18l6-1v5H9zM16.200 16.800l6-1v6h-6zM9 23.200h6v5l-6-1zM16.200 23.200h6v6l-6-1z" fill="#008a00" />
          </Svg>
        </Task>
        <Task $w={76}>
          <Svg width="40" height="38" viewBox="0 0 40 38">
            <ellipse cx="20" cy="31" rx="19" ry="6.500" fill="#16488f" />
            <path d="M5 3l29 9-12 9-8-3z" fill="#181818" />
            <path d="M5 3l13 17 19-3-4-6z" fill="#1a1a1b" />
            <path d="M4 13l15 9 18-3-9 9-9 6z" fill="#2d2d30" />
            <path d="M5 3l14 17 14-2M19 33l17-13" fill="none" stroke="#666" strokeWidth=".8" />
          </Svg>
        </Task>
        <Task $w={71} $open={0.5} $mr={1}>
          <Svg width="36" height="36" viewBox="0 0 36 36">
            <circle cx="18" cy="18" r="17.500" fill="#fcd20b" />
            <path d="M2.800 9.300A17.500 17.500 0 0 0 17 35.500l8-13.500-7-4z" fill="#4cae45" />
            <path d="M2.800 9.300L11 22l7-12h15.200A17.500 17.500 0 0 0 2.800 9.300z" fill="#e0301e" />
            <circle cx="18" cy="18" r="8" fill="#fff" />
            <circle cx="18" cy="18" r="6.600" fill="#3a80d2" />
          </Svg>
        </Task>
        <Task $w={71} $mr={3}><OfficeIcon c="#217346" dark="#1d6b40" letter="X" sheet /></Task>
        <Task $w={71} $open={0.16} $mr={2}><OfficeIcon c="#2b579a" dark="#234f93" letter="W" /></Task>
        <Task $w={71} $open={0.16}>
          <Svg width="38" height="38" viewBox="0 0 38 38">
            <path d="M18 6c11-1 18 7 17 15-1 9-9 14-20 14-5 0-1-6-5-7-4-2-9 1-9-5C1 13 8 7 18 6z" fill="#c5e3f3" stroke="#79a9c6" />
            <circle cx="7" cy="20" r="3.200" fill="#d93a2c" />
            <circle cx="13" cy="14" r="3.200" fill="#4fae3b" />
            <circle cx="21" cy="11" r="3.500" fill="#f4b21d" />
            <circle cx="17" cy="22" r="2.500" fill="#8f8d97" />
            <path d="M19 37l4-13 9-15 3 2-9 15z" fill="#dd7a23" />
            <path d="M30 2l9 0-4 9-5-3z" fill="#b7945b" />
          </Svg>
        </Task>
      </TaskIcons>
      <Tray>
        <TrayIcon $mr={15}>
          <Svg width="11" height="7" viewBox="0 0 11 7"><path d="M.5 6.500L5.500 1l5 5.500z" fill="#eee" stroke="#665" strokeWidth=".7" /></Svg>
        </TrayIcon>
        <TrayIcon $mr={10}>
          <Svg width="19" height="20" viewBox="0 0 19 20">
            <path d="M.7.7h2v18.600h-2zM3.500 2.500c5-1 6 3 13.500 1v9c-6 2-9-2-13.500-.5z" fill="#fff" stroke="#4a3535" />
            <circle cx="13.500" cy="14.500" r="5.200" fill="#d8321f" />
            <path d="M11.300 12.300l4.400 4.400M15.700 12.300l-4.400 4.400" stroke="#fff" strokeWidth="1.600" />
          </Svg>
        </TrayIcon>
        <TrayIcon $mr={11}><WinLogo s={20} o="#6b5050" /></TrayIcon>
        <TrayIcon $mr={10}>
          <Svg width="20" height="20" viewBox="0 0 20 20" fill="none">
            <rect x="9" y="2.500" width="8.500" height="15" stroke="#4a3535" strokeWidth="3.500" />
            <rect x="9" y="2.500" width="8.500" height="15" fill="#bfa3a3" stroke="#fff" strokeWidth="1.600" />
            <path d="M1 5.500h5v5H1zM2 1v5M5 1v5M3.500 10v9" stroke="#4a3535" strokeWidth="2.800" />
            <path d="M1.500 6h4v4h-4zM2 2v4M5 2v4M3.500 10v8" stroke="#fff" strokeWidth="1.200" />
          </Svg>
        </TrayIcon>
        <TrayIcon $mr={14}>
          <Svg width="20" height="19" viewBox="0 0 20 19" fill="none">
            <path d="M6 4h12.500v9H5V8M10 13v4M6 17h9M1 1h4v5H1zM3 6v7" stroke="#4a3535" strokeWidth="3.400" />
            <path d="M6 4h12.500v9H5V8M10 13v4M6 17h9M1 1h4v5H1zM3 6v7" stroke="#fff" strokeWidth="1.500" />
          </Svg>
        </TrayIcon>
        <TrayIcon $mr={13}>
          <Svg width="11" height="20" viewBox="0 0 11 20">
            <path d="M1 6h3l6-5.500v19L4 14H1z" fill="#fff" stroke="#4a3535" />
            <path d="M4 6v8" stroke="#4a3535" />
          </Svg>
        </TrayIcon>
        <Clock>11:01<br />06/10/2015</Clock>
      </Tray>
    </Taskbar>
  );
}

export default function App() {
  return (
    <Screen>
      <Global />
      <Browser />
      <AppHeader />
      <Workspace>
        <CampaignPanel />
        <Splitter>
          <Grip $w={8} $h={48}>
            <Svg width="5" height="9" viewBox="0 0 5 9"><path d="M5 0v9L0 4.500z" fill={PINK} /></Svg>
          </Grip>
        </Splitter>
        <AdsPanel />
      </Workspace>
      <BottomBar>
        <GripSlot><Grip $w={48} $h={8}><Svg width="10" height="5" viewBox="0 0 10 5"><path d="M0 5h10L5 0z" fill={PINK} /></Svg></Grip></GripSlot>
        <GripSlot $pl={9}><Grip $w={48} $h={8}><Svg width="10" height="5" viewBox="0 0 10 5"><path d="M0 5h10L5 0z" fill={PINK} /></Svg></Grip></GripSlot>
      </BottomBar>
      <TaskBar />
    </Screen>
  );
}
